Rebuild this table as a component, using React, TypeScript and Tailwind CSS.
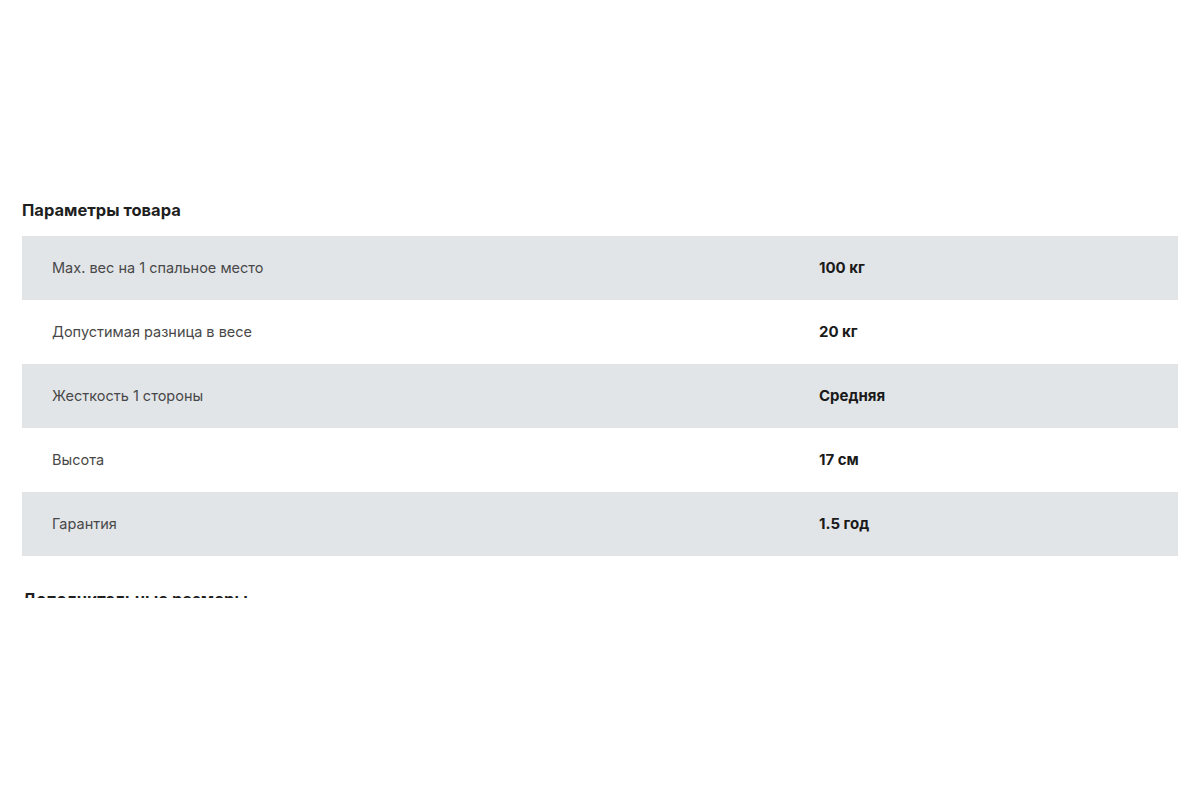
import React from "react";

const rows = [
  ["Max. вес на 1 спальное место", "100 кг"],
  ["Допустимая разница в весе", "20 кг"],
  ["Жесткость 1 стороны", "Средняя"],
  ["Высота", "17 см"],
  ["Гарантия", "1.5 год"],
];

export default function App() {
  return (
    <div
      className="w-[1200px] h-[800px] bg-white pt-[200px]"
      style={{ fontFamily: "Inter, 'Noto Sans', 'Liberation Sans', sans-serif" }}
    >
      <div className="mx-[22px] h-[398px] overflow-hidden">
        <h2 className="text-[16.5px] leading-[20px] font-bold text-[#1f1f1f]">
          Параметры товара
        </h2>
        <div className="mt-[16px]">
          {rows.map(([k, v], i) => (
            <div
              key={k}
              className={`grid grid-cols-[767px_1fr] items-center h-[64px] px-[30px] ${
                i % 2 === 0 ? "bg-[#e2e5e8]" : "bg-white"
              }`}
            >
              <span className="text-[14.5px] text-[#484848] font-normal">{k}</span>
              <span className="text-[15px] text-[#1a1a1a] font-bold">{v}</span>
            </div>
          ))}
        </div>
        <h2 className="mt-[33px] text-[16.5px] leading-[20px] font-bold text-[#1f1f1f]">
          Дополнительные размеры
        </h2>
      </div>
    </div>
  );
}
